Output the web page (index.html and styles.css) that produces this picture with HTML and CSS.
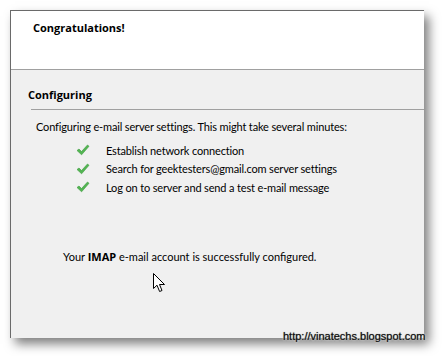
FILE: index.html
```html
<!DOCTYPE html>
<html lang="en">
<head>
  <meta charset="UTF-8" />
  <title>Add New Account</title>
  <link rel="stylesheet" href="styles.css">
</head>
<body>
  <div class="dialog">
    <div class="header">
      <h1>Congratulations!</h1>
    </div>

    <div class="content">
      <h2>Configuring</h2>
      <p class="intro">Configuring e-mail server settings. This might take several minutes:</p>

      <ul class="steps">
        <li>
          <svg class="tick" width="14" height="12" viewBox="0 0 14 12">
            <path d="M1 6.5 L3 5 L5.5 7.5 L11.5 1 L13 2.3 L5.6 10.8 Z" fill="#52b552" stroke="#3d9a3d" stroke-width="0.6" stroke-linejoin="round"/>
          </svg>
          Establish network connection
        </li>
        <li>
          <svg class="tick" width="14" height="12" viewBox="0 0 14 12">
            <path d="M1 6.5 L3 5 L5.5 7.5 L11.5 1 L13 2.3 L5.6 10.8 Z" fill="#52b552" stroke="#3d9a3d" stroke-width="0.6" stroke-linejoin="round"/>
          </svg>
          Search for geektesters@gmail.com server settings
        </li>
        <li>
          <svg class="tick" width="14" height="12" viewBox="0 0 14 12">
            <path d="M1 6.5 L3 5 L5.5 7.5 L11.5 1 L13 2.3 L5.6 10.8 Z" fill="#52b552" stroke="#3d9a3d" stroke-width="0.6" stroke-linejoin="round"/>
          </svg>
          Log on to server and send a test e-mail message
        </li>
      </ul>

      <p class="result">Your <b>IMAP</b> e-mail account is successfully configured.</p>

      <!-- mouse pointer -->
      <svg class="cursor" width="13" height="20" viewBox="0 0 13 20">
        <path d="M0.5 0.5 L0.5 15.5 L4 12.2 L6.6 18.5 L9 17.5 L6.5 11.5 L11.5 11.5 Z" fill="#fff" stroke="#000" stroke-width="1" stroke-linejoin="miter"/>
      </svg>
    </div>
  </div>

  <div class="watermark">http://vinatechs.blogspot.com</div>
</body>
</html>
```

FILE: styles.css
```css
html, body {
  margin: 0;
  padding: 0;
  background: #fff;
  font-family: 'Lato', 'Open Sans', sans-serif;
  font-size: 11px;
  letter-spacing: -0.15px;
  color: #000;
  width: 442px;
  height: 356px;
  overflow: hidden;
  position: relative;
}

.dialog {
  margin: 10px 0 0 10px;
  width: 413px;
  height: 327px;
  border-top: 1px solid #6a6a6a;
  border-left: 1px solid #6a6a6a;
  box-shadow: 5px 6px 10px rgba(0, 0, 0, 0.5);
  display: flex;
  flex-direction: column;
  position: relative;
}

.header {
  background: #fff;
  height: 58px;
  border-bottom: 1px solid #a0a0a0;
  flex-shrink: 0;
}

h1 {
  margin: 0;
  padding: 9px 0 0 22px;
  font-family: 'Open Sans', sans-serif;
  font-size: 11px;
  letter-spacing: 0;
  font-weight: bold;
}

.content {
  flex: 1;
  background: #f0f0f0;
  padding: 0 0 0 17px;
  position: relative;
}

h2 {
  margin: 0;
  padding: 17px 0 0 0;
  font-family: 'Open Sans', sans-serif;
  font-size: 11px;
  letter-spacing: 0;
  font-weight: bold;
}

.content h2::after {
  content: "";
  display: block;
  height: 1px;
  margin: 7px 0 0 3px;
  background: #a0a0a0;
}

.intro {
  margin: 10px 0 8px 8px;
}

.steps {
  list-style: none;
  margin: 0;
  padding: 0 0 0 48px;
}

.steps li {
  display: flex;
  align-items: center;
  height: 18.5px;
}

.tick {
  margin-right: 16px;
}

.result {
  margin: 52px 0 0 35px;
  letter-spacing: 0;
}

.result b {
  font-family: 'Open Sans', sans-serif;
  font-weight: bold;
  font-size: 11px;
}

.cursor {
  position: absolute;
  left: 142px;
  top: 203px;
}

.watermark {
  position: absolute;
  left: 283px;
  top: 330px;
  font-family: 'Liberation Sans', Arial, sans-serif;
  font-size: 11px;
  letter-spacing: 0;
  color: #111;
  text-shadow: 0 0 1px #444, 0 0 2px #fff, 0 0 2px #fff;
}
```
